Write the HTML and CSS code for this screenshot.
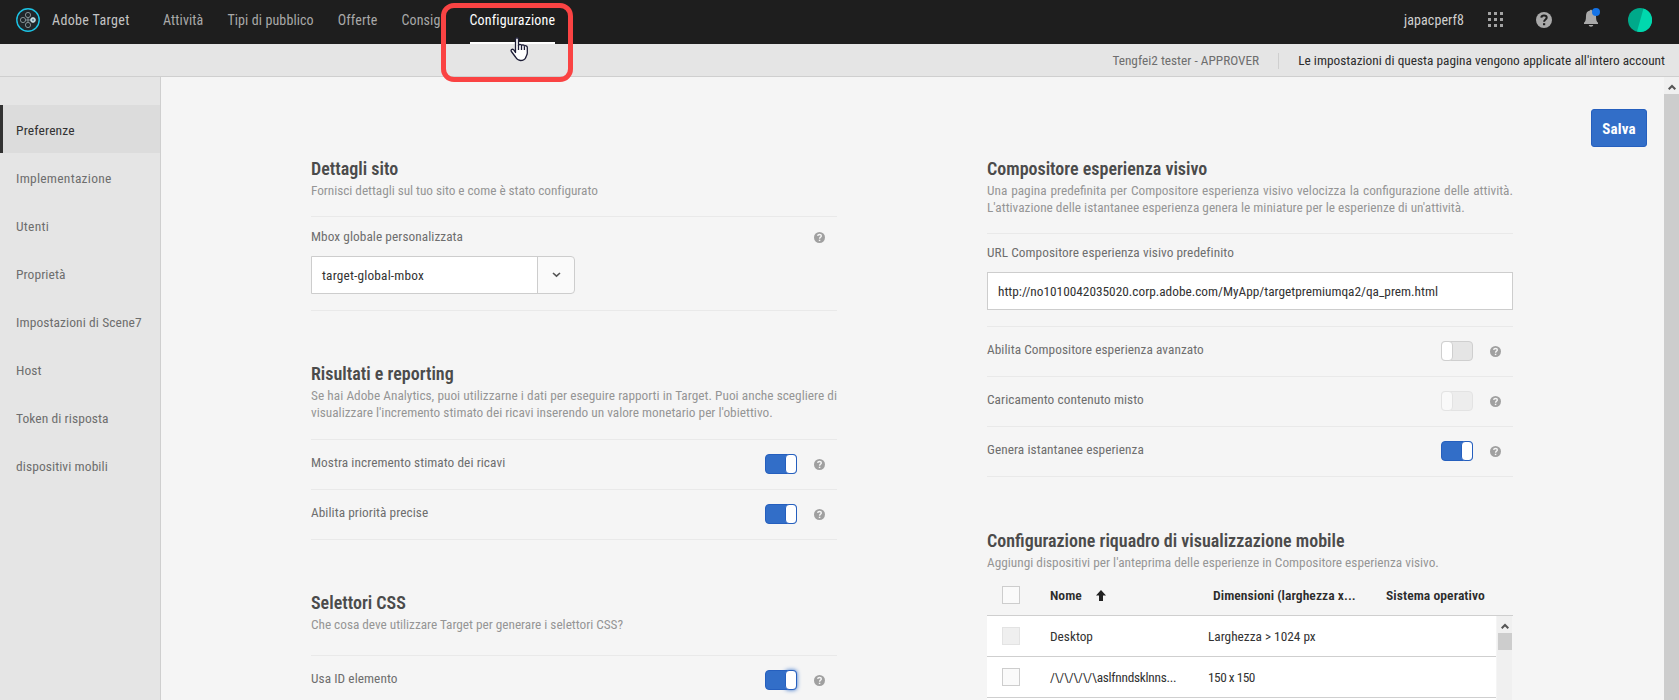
FILE: index.html
```html
<!DOCTYPE html>
<html lang="it">
<head>
<meta charset="utf-8">
<title>Adobe Target - Configurazione</title>
<link rel="stylesheet" href="styles.css">
</head>
<body>
<svg class="defs" width="0" height="0" aria-hidden="true">
  <symbol id="help" viewBox="0 0 16 16">
    <circle cx="8" cy="8" r="8" fill="currentColor" stroke="none"/>
    <path d="M5.300 5.600C5.500 4 6.700 3.600 8 3.600c1.500 0 2.700.8 2.700 2.200C10.700 7.500 8.100 7.500 8.100 9.800" fill="none" stroke-width="2"/>
    <rect x="7" y="11.200" width="2.200" height="2" stroke="none"/>
  </symbol>
</svg>

<header class="topbar">
  <svg class="logo" viewBox="0 0 24 24" width="24" height="24" fill="none">
    <circle cx="12" cy="12" r="11.200" fill="#20262a" stroke="#1cc3e4" stroke-width="1.400"/>
    <g stroke="#8d9a9e" stroke-width="0.900">
      <circle cx="12" cy="7" r="2.600"/><circle cx="7" cy="12" r="2.600"/><circle cx="12" cy="17" r="2.600"/>
      <path d="M12 9.600v4.800M9.600 12h5"/>
    </g>
    <circle cx="17" cy="12" r="2.400" fill="#b5d3dc" stroke="#d4e6eb" stroke-width="0.800"/>
    <circle cx="17" cy="12" r="0.900" fill="#4d6f80"/>
  </svg>
  <span class="brand">Adobe Target</span>
  <nav class="nav">
    <a>Attività</a>
    <a>Tipi di pubblico</a>
    <a>Offerte</a>
    <a class="clipped">Consigli</a>
    <a class="current">Configurazione</a>
  </nav>
  <div class="tools">
    <span class="org">japacperf8</span>
    <svg class="apps" viewBox="0 0 15 15" width="15" height="15" fill="#a3a3a3">
      <path d="M0 0h3v3H0zM6 0h3v3H6zM12 0h3v3h-3zM0 6h3v3H0zM6 6h3v3H6zM12 6h3v3h-3zM0 12h3v3H0zM6 12h3v3H6zM12 12h3v3h-3z"/>
    </svg>
    <svg class="help-top" width="16" height="16"><use href="#help"/></svg>
    <svg class="bell" viewBox="0 0 18 20" width="18" height="20">
      <path d="M7 2.500C7 1.500 9 1.500 9 2.500c3 .5 4 2.500 4 5.500 0 4 .6 5.700 2 6.800V16H1v-1.200C2.400 13.700 3 12 3 8c0-3 1-5 4-5.500zM5.800 17h4.400c0 2.200-4.400 2.200-4.400 0z" fill="#a9a9a9"/>
      <circle cx="13" cy="4" r="4" fill="#1473e6"/>
    </svg>
    <svg class="avatar" viewBox="0 0 24 24" width="24" height="24">
      <circle cx="12" cy="12" r="12" fill="#00a98a"/>
      <path d="M15.500.5A12 12 0 0 1 9 23.600z" fill="#00d8ae"/>
    </svg>
  </div>
</header>

<div class="infobar">
  <span class="role">Tengfei2 tester - APPROVER</span>
  <span class="scope">Le impostazioni di questa pagina vengono applicate all'intero account</span>
</div>

<div class="page">
  <aside class="sidebar">
    <a class="active">Preferenze</a>
    <a class="wide">Implementazione</a>
    <a class="wide">Utenti</a>
    <a>Proprietà</a>
    <a>Impostazioni di Scene7</a>
    <a>Host</a>
    <a>Token di risposta</a>
    <a>dispositivi mobili</a>
  </aside>

  <main class="content">
    <div class="column">
      <section class="block site">
        <h2>Dettagli sito</h2>
        <p>Fornisci dettagli sul tuo sito e come è stato configurato</p>
        <div class="field">
          <div class="field-head"><label>Mbox globale personalizzata</label><svg class="help" width="11" height="11"><use href="#help"/></svg></div>
          <div class="combo"><span>target-global-mbox</span>
            <button><svg width="9" height="6" viewBox="0 0 9 6" fill="none" stroke="#555" stroke-width="1.600"><path d="M1 1l3.500 3.200L8 1"/></svg></button>
          </div>
        </div>
      </section>
      <section class="block results">
        <h2>Risultati e reporting</h2>
        <p>Se hai Adobe Analytics, puoi utilizzarne i dati per eseguire rapporti in Target. Puoi anche scegliere di visualizzare l'incremento stimato dei ricavi inserendo un valore monetario per l'obiettivo.</p>
        <div class="option"><label>Mostra incremento stimato dei ricavi</label><i class="switch on"></i><svg class="help" width="11" height="11"><use href="#help"/></svg></div>
        <div class="option"><label>Abilita priorità precise</label><i class="switch on"></i><svg class="help" width="11" height="11"><use href="#help"/></svg></div>
      </section>
      <section class="block css">
        <h2>Selettori CSS</h2>
        <p>Che cosa deve utilizzare Target per generare i selettori CSS?</p>
        <div class="option"><label>Usa ID elemento</label><i class="switch on focus"></i><svg class="help" width="11" height="11"><use href="#help"/></svg></div>
      </section>
    </div>

    <div class="column right">
      <section class="block composer">
        <h2>Compositore esperienza visivo</h2>
        <p>Una pagina predefinita per Compositore esperienza visivo velocizza la configurazione delle attività. L'attivazione delle istantanee esperienza genera le miniature per le esperienze di un'attività.</p>
        <div class="field">
          <div class="field-head"><label>URL Compositore esperienza visivo predefinito</label></div>
          <div class="input">http://no1010042035020.corp.adobe.com/MyApp/targetpremiumqa2/qa_prem.html</div>
        </div>
        <div class="option"><label>Abilita Compositore esperienza avanzato</label><i class="switch"></i><svg class="help" width="11" height="11"><use href="#help"/></svg></div>
        <div class="option"><label>Caricamento contenuto misto</label><i class="switch disabled"></i><svg class="help" width="11" height="11"><use href="#help"/></svg></div>
        <div class="option"><label>Genera istantanee esperienza</label><i class="switch on"></i><svg class="help" width="11" height="11"><use href="#help"/></svg></div>
      </section>
      <section class="block viewport">
        <h2>Configurazione riquadro di visualizzazione mobile</h2>
        <p>Aggiungi dispositivi per l'anteprima delle esperienze in Compositore esperienza visivo.</p>
        <div class="thead">
          <i class="check"></i>
          <span class="name">Nome <svg width="10" height="11" viewBox="0 0 10 11" fill="#222"><path d="M5 0l5 5.500H7V11H3V5.500H0z"/></svg></span>
          <span class="size">Dimensioni (larghezza x...</span>
          <span class="os">Sistema operativo</span>
        </div>
        <div class="tbody">
          <div class="rows">
            <div class="row"><i class="check off"></i><span class="name">Desktop</span><span>Larghezza &gt; 1024 px</span></div>
            <div class="row"><i class="check"></i><span class="name path">/\/\/\/\/\aslfnndsklnns...</span><span class="dims">150 x 150</span></div>
            <div class="row"></div>
          </div>
          <div class="scroll"><svg width="8" height="6" viewBox="0 0 8 6" fill="none" stroke="#555" stroke-width="2"><path d="M.7 5.300L4 2l3.300 3.300"/></svg><i class="thumb"></i></div>
        </div>
      </section>
    </div>
    <button class="save">Salva</button>
  </main>
  <div class="scroll page-scroll"><svg width="8" height="6" viewBox="0 0 8 6" fill="none" stroke="#555" stroke-width="2"><path d="M.7 5.300L4 2l3.300 3.300"/></svg><i class="thumb"></i></div>
</div>

<div class="callout"></div>
<svg class="cursor" width="19" height="25" viewBox="0 0 19 25">
  <path d="M5.500 15.500V2.500C5.500.3 8.500.3 8.500 2.500v6c.3-1.400 2.700-1.400 3 .2.500-1.200 2.700-1 2.900.5.700-1 2.900-.6 2.900 1.300v5.500c0 2-1.300 3-1.500 4.500C15 22.300 13 23.500 10.500 23.500S6.800 22.300 5.500 20L1.400 14.500c-1-1.600.8-3 2.200-1.800z" fill="#fff" stroke="#1c1c35" stroke-width="1.300" stroke-linejoin="round"/>
  <path d="M8.500 8v5M11.500 9v4M14.400 9.500V13" stroke="#1c1c35" stroke-width="1.300"/>
</svg>
</body>
</html>
```

FILE: styles.css
```css
*, *::before { box-sizing: border-box; }
html, body { height: 100%; }
body {
  margin: 0;
  overflow: hidden;
  display: flex;
  flex-direction: column;
  background: #f5f5f5;
  color: #6e6e6e;
  font-family: Roboto, "Open Sans", sans-serif;
  font-stretch: 75%;
  font-size: 13.3px;
  line-height: 17px;
}
button { font: inherit; padding: 0; }
svg { display: block; flex: none; }
h2, p { margin: 0; }
.defs { position: absolute; }

/* Top bar */
.topbar {
  flex: none;
  height: 44px;
  display: flex;
  align-items: flex-start;
  padding: 0 27px 0 16px;
  background: #1e1e1e;
  color: #a9a9a9;
  font-size: 14px;
  line-height: 40px;
}
.logo { margin-top: 8px; }
.brand { margin-left: 12px; width: 111px; color: #c4c4c4; letter-spacing: .35px; }
.nav { display: flex; gap: 24px; white-space: nowrap; }
.nav a { letter-spacing: .11px; }
.nav .clipped { width: 40px; overflow: hidden; margin-right: 4px; }
.nav .current { height: 44px; color: #fff; border-bottom: 2px solid #fff; letter-spacing: .15px; }
.tools { margin-left: auto; display: flex; }
.org { color: #d0d0d0; width: 84px; letter-spacing: .1px; }
.apps { margin-top: 12px; }
.help-top { margin: 12px 0 0 33px; color: #a9a9a9; }
.help-top use { stroke: #1e1e1e; fill: #1e1e1e; }
.bell { margin: 8px 0 0 31px; }
.avatar { margin: 8px 0 0 27px; }

/* Account strip */
.infobar {
  flex: none;
  height: 33px;
  display: flex;
  align-items: center;
  justify-content: flex-end;
  padding: 1px 14px 0 0;
  background: #e5e5e5;
  border-bottom: 1px solid #cfcfcf;
  line-height: 16px;
}
.role { padding-right: 19px; border-right: 1px solid #cfcfcf; }
.scope { padding-left: 19px; color: #2c2c2c; letter-spacing: .02px; }

/* Body */
.page { flex: 1; min-height: 0; display: flex; }
.sidebar {
  flex: none;
  width: 161px;
  padding-top: 28px;
  background: #e5e5e5;
  border-right: 1px solid #cfcfcf;
}
.sidebar a {
  display: block;
  height: 48px;
  padding-left: 16px;
  line-height: 51px;
  font-size: 13.5px;
  letter-spacing: .07px;
}
.sidebar .wide { letter-spacing: .25px; }
.sidebar .active { padding-left: 13px; border-left: 3px solid #323232; background: #dcdcdc; color: #323232; letter-spacing: .15px; }

.content {
  position: relative;
  flex: 1;
  display: flex;
  gap: 150px;
  padding: 79px 0 0 150px;
  overflow: hidden;
}
.column { flex: none; width: 526px; }
.save {
  position: absolute;
  top: 32px;
  left: 1430px;
  width: 56px;
  height: 38px;
  border: 1px solid #255fbe;
  border-radius: 3px;
  background: #326ec8;
  color: #fff;
  font-weight: 700;
  font-size: 15px;
  letter-spacing: .2px;
  line-height: 38px;
}

.block h2 { color: #4b4b4b; font-size: 18px; font-weight: 600; line-height: 25px; }
.block p { padding-top: 1px; color: #959595; text-align: justify; }
.site p { padding-bottom: 17px; letter-spacing: -.05px; }
.results p { padding-bottom: 18px; }
.css p { padding-bottom: 22px; letter-spacing: -.03px; }
.composer p { padding-bottom: 17px; }
.results { margin-top: 50px; }
.css { margin-top: 50px; }
.viewport { margin-top: 51px; }

label { letter-spacing: .06px; }
.field { border-top: 1px solid #e9e9e9; }
.site .field { height: 95px; border-bottom: 1px solid #e9e9e9; }
.field-head { display: flex; justify-content: space-between; padding-right: 12px; }
.site .field-head { padding-top: 11px; margin-bottom: 11px; }
.composer .field { height: 93px; }
.composer .field-head { padding-top: 10px; margin-bottom: 11px; }
.help { color: #a0a0a0; }
.help use { stroke: #f5f5f5; fill: #f5f5f5; }
.field .help { margin-top: 4px; }

.combo { display: flex; width: 264px; height: 38px; border: 1px solid #cdcdcd; border-radius: 0 4px 4px 0; background: #fafafa; }
.combo span { width: 226px; padding-left: 10px; line-height: 37px; background: #fff; border-right: 1px solid #cdcdcd; color: #323232; letter-spacing: .18px; }
.combo button { flex: 1; display: flex; align-items: center; justify-content: center; border: 0; background: none; }
.input { height: 38px; padding-left: 10px; border: 1px solid #cdcdcd; background: #fff; color: #323232; line-height: 37px; }

.option { display: flex; height: 50px; padding: 14px 12px 0 0; border-top: 1px solid #e9e9e9; }
.option:last-child { height: 51px; border-bottom: 1px solid #e9e9e9; }
.option label { flex: 1; }
.option .help { margin: 5px 0 0 17px; }

.switch { width: 32px; height: 20px; border: 1px solid #cfcfcf; border-radius: 4px; background: #e5e5e5; }
.switch::before { content: ""; display: block; width: 12px; height: 20px; margin: -1px; border: 1px solid #cfcfcf; border-radius: 4px; background: #fff; }
.switch.on { background: #326ec8; border-color: #255fbe; }
.switch.on::before { margin-left: 19px; border-color: #255fbe; }
.switch.disabled { opacity: .45; }
.switch.focus::before { box-shadow: 0 0 4px #326ec8; }

/* Device table */
.thead { display: flex; height: 45px; padding: 16px 0 0 15px; border-bottom: 1px solid #cfcfcf; color: #2c2c2c; font-weight: 600; font-size: 13.6px; white-space: nowrap; }
.thead .check { margin-top: -1px; }
.check { flex: none; width: 18px; height: 18px; border: 1px solid #cdcdcd; background: #fafafa; }
.check.off { background: #efefef; border-color: #e3e3e3; }
.thead .name { display: flex; gap: 14px; width: 163px; margin-left: 30px; }
.thead .name svg { margin-top: 3px; }
.thead .size { width: 173px; letter-spacing: .04px; }
.thead .os { letter-spacing: .05px; }
.tbody { display: flex; height: 110px; }
.rows { width: 509px; background: #fff; }
.row { display: flex; height: 41px; padding: 11px 0 0 15px; border-bottom: 1px solid #cfcfcf; color: #323232; line-height: 19px; }
.row .name { width: 158px; margin-left: 30px; white-space: nowrap; }
.row .path { letter-spacing: -.26px; }
.row .dims { letter-spacing: -.5px; }
.scroll { flex: none; display: flex; flex-direction: column; align-items: center; margin-left: 1px; width: 15px; padding-top: 7px; background: #f0f0f0; }
.scroll .thumb { width: 14px; height: 17px; margin-top: 4px; background: #cdcdcd; }
.page-scroll { margin: 0; width: 15px; background: #f0f0f0; }
.page-scroll .thumb { width: 15px; height: auto; flex: 1; }

/* Pointer and highlight over the Configurazione tab */
.callout { position: absolute; left: 441px; top: 3px; width: 132px; height: 79px; border: 5px solid #fa4343; border-radius: 13px; }
.cursor { position: absolute; left: 510px; top: 37px; }
```
